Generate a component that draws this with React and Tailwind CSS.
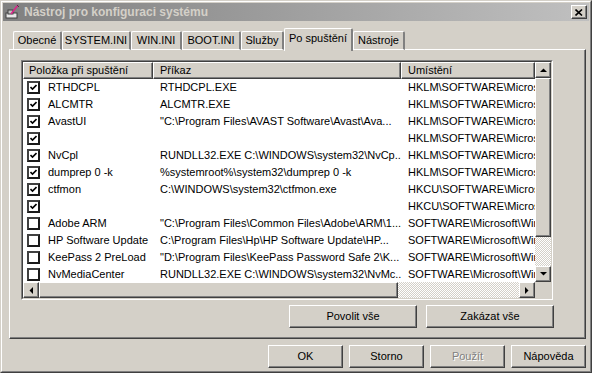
import React from 'react';

// data z okna "Po spuštění"
const rows = [
  [true, 'RTHDCPL', 'RTHDCPL.EXE', 'HKLM\\SOFTWARE\\Microsoft\\Windows'],
  [true, 'ALCMTR', 'ALCMTR.EXE', 'HKLM\\SOFTWARE\\Microsoft\\Windows'],
  [true, 'AvastUI', '"C:\\Program Files\\AVAST Software\\Avast\\Ava...', 'HKLM\\SOFTWARE\\Microsoft\\Windows'],
  [true, '', '', 'HKLM\\SOFTWARE\\Microsoft\\Windows'],
  [true, 'NvCpl', 'RUNDLL32.EXE C:\\WINDOWS\\system32\\NvCp...', 'HKLM\\SOFTWARE\\Microsoft\\Windows'],
  [true, 'dumprep 0 -k', '%systemroot%\\system32\\dumprep 0 -k', 'HKLM\\SOFTWARE\\Microsoft\\Windows'],
  [true, 'ctfmon', 'C:\\WINDOWS\\system32\\ctfmon.exe', 'HKCU\\SOFTWARE\\Microsoft\\Windows'],
  [true, '', '', 'HKCU\\SOFTWARE\\Microsoft\\Windows'],
  [false, 'Adobe ARM', '"C:\\Program Files\\Common Files\\Adobe\\ARM\\1...', 'SOFTWARE\\Microsoft\\Windows\\CurrentVersion'],
  [false, 'HP Software Update', 'C:\\Program Files\\Hp\\HP Software Update\\HP...', 'SOFTWARE\\Microsoft\\Windows\\CurrentVersion'],
  [false, 'KeePass 2 PreLoad', '"D:\\Program Files\\KeePass Password Safe 2\\K...', 'SOFTWARE\\Microsoft\\Windows\\CurrentVersion'],
  [false, 'NvMediaCenter', 'RUNDLL32.EXE C:\\WINDOWS\\system32\\NvMc...', 'SOFTWARE\\Microsoft\\Windows\\CurrentVersion'],
];

const tabs = [
  ['Obecné', 'w-[49px]'],
  ['SYSTEM.INI', 'w-[69px]'],
  ['WIN.INI', 'w-[51px]'],
  ['BOOT.INI', 'w-[59px]'],
  ['Služby', 'w-[43px]'],
  ['Po spuštění', 'w-[69px]', true],
  ['Nástroje', 'w-[52px]'],
];

const raised = 'border border-t-white border-l-white border-r-[#404040] border-b-[#404040] shadow-[inset_-1px_-1px_0_#808080]';
const hatch = 'bg-[repeating-conic-gradient(#d4d0c8_0_25%,#ffffff_0_50%)] bg-[length:2px_2px]';

function Arrow({ dir }) {
  const pts = {
    up: '0,4 7,4 3.5,0.5',
    down: '0,0 7,0 3.5,3.5',
    left: '4,0 4,7 0.5,3.5',
    right: '0,0 0,7 3.5,3.5',
  }[dir];
  const vertical = dir === 'up' || dir === 'down';
  return (
    <div className={`${raised} w-[16px] h-[16px] bg-[#d4d0c8] flex items-center justify-center shrink-0`}>
      <svg width={vertical ? 7 : 4} height={vertical ? 4 : 7}>
        <polygon points={pts} fill="#000" />
      </svg>
    </div>
  );
}

function Check({ on }) {
  return (
    <div className="w-[13px] h-[13px] bg-white border-2 border-t-[#404040] border-l-[#404040] border-r-[#1a1a1a] border-b-[#1a1a1a] flex items-center justify-center shrink-0">
      {on && (
        <svg width="7" height="7" viewBox="0 0 7 7">
          <path d="M0.5 3 L2.5 5 L6.5 1" stroke="#000" strokeWidth="1.6" fill="none" />
        </svg>
      )}
    </div>
  );
}

function Btn({ children, w = 'w-[75px]', disabled }) {
  return (
    <div className={`${raised} ${w} h-[23px] bg-[#d4d0c8] flex items-center justify-center`}>
      <span className={disabled ? 'text-[#808080] [text-shadow:1px_1px_0_#fff]' : 'text-black'}>{children}</span>
    </div>
  );
}

export default function App() {
  return (
    <div className="w-[592px] h-[373px] bg-[#d4d0c8] text-[11px] leading-none text-black overflow-hidden border border-t-[#d4d0c8] border-l-[#d4d0c8] border-r-[#404040] border-b-[#404040]" style={{ fontFamily: '"Liberation Sans", Arial, sans-serif' }}>
      <div className="h-full flex flex-col border border-t-white border-l-white border-r-[#808080] border-b-[#808080] p-px">
        {/* titulek */}
        <div className="h-[18px] flex items-center bg-gradient-to-r from-[#808080] to-[#c0c0c0] pl-[2px] pr-[2px] shrink-0">
          <svg width="16" height="16" viewBox="0 0 16 16" className="shrink-0">
            <rect x="1" y="9" width="11" height="5" fill="#e8e8e8" stroke="#404040" strokeWidth="1" />
            <rect x="3" y="6" width="5" height="4" fill="#c0c0c0" stroke="#404040" strokeWidth="1" />
            <path d="M6 10 L13 1" stroke="#e0208a" strokeWidth="1.5" />
            <path d="M12 1 L14 3" stroke="#404040" strokeWidth="1" />
          </svg>
          <span className="ml-[3px] font-bold text-[12px] text-[#d4d0c8] whitespace-nowrap">Nástroj pro konfiguraci systému</span>
          <div className={`${raised} ml-auto w-[16px] h-[14px] bg-[#d4d0c8] flex items-center justify-center`}>
            <svg width="8" height="7" viewBox="0 0 8 7">
              <path d="M0.5 0.5 L7 6.5 M7 0.5 L0.5 6.5" stroke="#000" strokeWidth="1.6" />
            </svg>
          </div>
        </div>

        {/* záložky */}
        <div className="flex items-end h-[22px] mt-[7px] ml-[8px] pl-[2px] relative z-10 shrink-0">
          {tabs.map(([t, w, active]) => (
            <div
              key={t}
              className={`${w} flex items-center justify-center bg-[#d4d0c8] border-t border-l border-t-white border-l-white border-r-2 border-r-[#808080] rounded-t-[2px] ${active ? 'h-[23px] -mb-px pb-[3px]' : 'h-[19px] border-b border-b-white'}`}
            >
              <span className="whitespace-nowrap">{t}</span>
            </div>
          ))}
        </div>

        {/* panel */}
        <div className="ml-[6px] w-[577px] h-[290px] -mt-px border border-t-white border-l-white border-r-[#404040] border-b-[#404040] shadow-[inset_-1px_-1px_0_#808080] pt-[10px] pl-[11px] shrink-0">
          {/* seznam */}
          <div className="w-[532px] h-[240px] border border-t-[#808080] border-l-[#808080] border-r-white border-b-white">
            <div className="w-full h-full border border-t-[#404040] border-l-[#404040] border-r-[#d4d0c8] border-b-[#d4d0c8] bg-white flex flex-col overflow-hidden">
              <div className="flex h-[220px]">
                <div className="w-[512px] flex flex-col overflow-hidden">
                  <div className="flex h-[17px] shrink-0 bg-[#d4d0c8]">
                    <div className={`${raised} w-[130px] flex items-center pl-[5px]`}>Položka při spuštění</div>
                    <div className={`${raised} w-[248px] flex items-center pl-[6px]`}>Příkaz</div>
                    <div className={`${raised} flex-1 flex items-center pl-[6px]`}>Umístění</div>
                  </div>
                  {rows.map(([on, name, cmd, loc], i) => (
                    <div key={i} className="flex h-[17px] shrink-0 items-center">
                      <div className="w-[130px] flex items-center pl-[4px] gap-[8px] overflow-hidden whitespace-nowrap">
                        <Check on={on} />
                        <span>{name}</span>
                      </div>
                      <div className="w-[248px] pl-[7px] overflow-hidden whitespace-nowrap">{cmd}</div>
                      <div className="flex-1 pl-[7px] overflow-hidden whitespace-nowrap">{loc}</div>
                    </div>
                  ))}
                </div>
                {/* svislý posuvník */}
                <div className="w-[16px] flex flex-col">
                  <Arrow dir="up" />
                  <div className={`${raised} h-[159px] bg-[#d4d0c8]`} />
                  <div className={`flex-1 ${hatch}`} />
                  <Arrow dir="down" />
                </div>
              </div>
              {/* vodorovný posuvník */}
              <div className="flex h-[16px]">
                <Arrow dir="left" />
                <div className={`${raised} w-[359px] bg-[#d4d0c8]`} />
                <div className={`flex-1 ${hatch}`} />
                <Arrow dir="right" />
                <div className="w-[16px] bg-[#d4d0c8]" />
              </div>
            </div>
          </div>
          <div className="flex justify-end gap-[9px] w-[533px] mt-[5px]">
            <Btn w="w-[128px]">Povolit vše</Btn>
            <Btn w="w-[128px]">Zakázat vše</Btn>
          </div>
        </div>

        {/* tlačítka */}
        <div className="flex gap-[6px] justify-end pr-[3px] mt-[6px]">
          <Btn>OK</Btn>
          <Btn>Storno</Btn>
          <Btn disabled>Použít</Btn>
          <Btn>Nápověda</Btn>
        </div>
      </div>
    </div>
  );
}
